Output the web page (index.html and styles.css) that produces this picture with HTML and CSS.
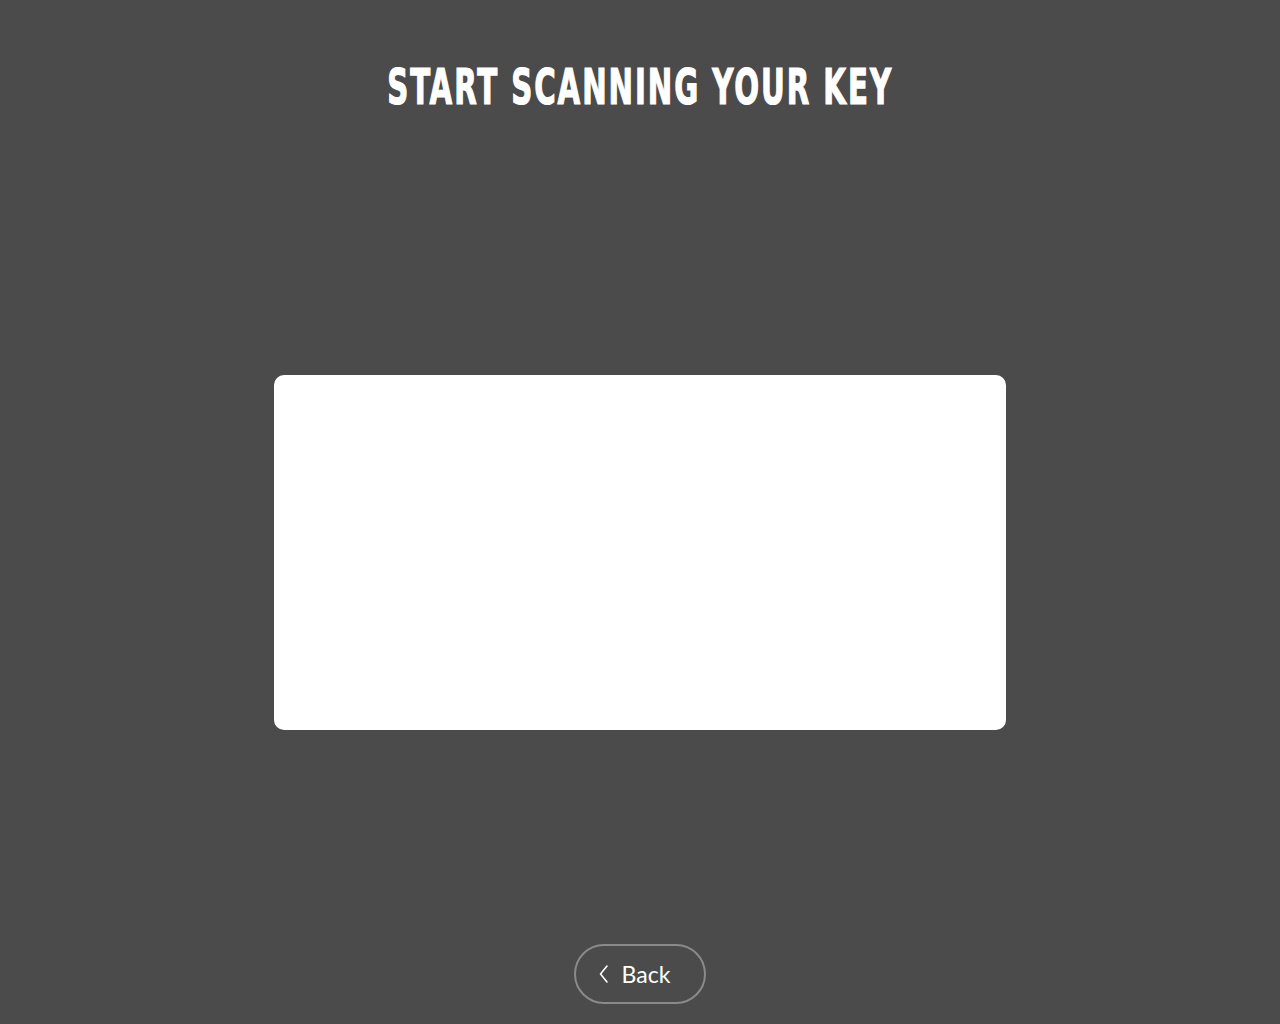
FILE: index.html
```html
<!DOCTYPE html>
<html lang="en">
<head>
<meta charset="utf-8">
<title>Start scanning your key</title>
<link rel="stylesheet" href="styles.css">
</head>
<body>
<main class="screen">
  <h1 class="title"><span class="title-text">START SCANNING YOUR KEY</span></h1>
  <div class="stage">
    <div class="scan-card"></div>
  </div>
  <footer class="footer">
    <button class="back-btn" type="button">
      <svg class="chev" width="12" height="20" viewBox="0 0 12 20" aria-hidden="true">
        <path d="M9 2 L2.5 10 L9 18" fill="none" stroke="#fff" stroke-width="1.6" stroke-linecap="round" stroke-linejoin="round"/>
      </svg>
      <span>Back</span>
    </button>
  </footer>
</main>
</body>
</html>
```
FILE: styles.css
```css
html, body {
  margin: 0;
  padding: 0;
  background: #4b4b4b;
}
.screen {
  width: 1280px;
  height: 1024px;
  display: flex;
  flex-direction: column;
  align-items: center;
  box-sizing: border-box;
}
.title {
  margin: 60px 0 0;
  font-family: "DejaVu Sans Condensed", "DejaVu Sans", sans-serif;
  font-weight: 700;
  font-size: 50px;
  line-height: 54px;
  color: #fff;
  letter-spacing: 3px;
  white-space: nowrap;
}
.title-text {
  display: inline-block;
  transform: scaleX(0.65);
  transform-origin: center;
  -webkit-text-stroke: 1.2px #fff;
}
.stage {
  flex: 1;
  display: flex;
  align-items: center;
  justify-content: center;
  width: 100%;
  padding-top: 46px;
  box-sizing: border-box;
}
.scan-card {
  width: 732px;
  height: 355px;
  background: #fff;
  border-radius: 10px;
}
.footer {
  padding-bottom: 20px;
}
.back-btn {
  width: 132px;
  height: 60px;
  border: 2px solid #8a8a8a;
  border-radius: 30px;
  background: transparent;
  color: #fff;
  font-family: "Lato", "Open Sans", sans-serif;
  font-size: 23px;
  font-weight: 400;
  display: flex;
  align-items: center;
  justify-content: center;
  gap: 12px;
  padding: 0 12px 0 0;
  box-sizing: border-box;
}
.chev {
  display: block;
}
```
